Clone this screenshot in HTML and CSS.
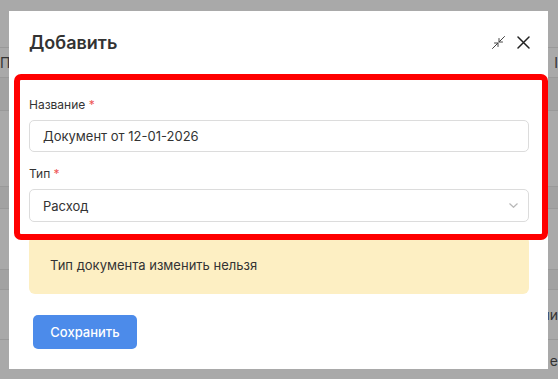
FILE: index.html
```html
<!DOCTYPE html>
<html lang="ru">
<head>
  <meta charset="UTF-8" />
  <meta name="viewport" content="width=device-width, initial-scale=1.0" />
  <title>Добавить</title>
  <link rel="stylesheet" href="styles.css">
</head>
<body>

  <!-- page under the overlay -->
  <div class="backdrop">
    <div class="row row-top"></div>
    <div class="row row-head"><span class="cut-left">По</span><span class="cut-right">I</span></div>
    <div class="row row-band"></div>
    <div class="row row-tall"></div>
    <div class="row row-band2"></div>
    <div class="row row-mid"></div>
    <div class="row row-band3"></div>
    <div class="row row-text"><span class="cut-right">пи</span></div>
    <div class="row row-last"><span class="cut-right">е</span></div>
  </div>

  <div class="modal">
    <div class="modal-header">
      <h2 class="modal-title">Добавить</h2>
      <div class="modal-tools">
        <button class="icon-btn" title="Свернуть">
          <svg width="13" height="13" viewBox="0 0 13 13" fill="none" stroke="#444" stroke-width="1" stroke-linecap="round">
            <path d="M12.5 0.5 L7 6"/>
            <path d="M7 2.5 V6 H10.5"/>
            <path d="M0.5 12.5 L6 7"/>
            <path d="M2.5 7 H6 V10.5"/>
          </svg>
        </button>
        <button class="icon-btn" title="Закрыть">
          <svg width="13" height="13" viewBox="0 0 13 13" fill="none" stroke="#222" stroke-width="1.5" stroke-linecap="round">
            <path d="M1 1 L12 12 M12 1 L1 12"/>
          </svg>
        </button>
      </div>
    </div>

    <div class="form-area">
      <div class="field">
        <label class="field-label">Название <span class="req">*</span></label>
        <div class="input">Документ от 12-01-2026</div>
      </div>
      <div class="field">
        <label class="field-label">Тип <span class="req">*</span></label>
        <div class="input select">
          <span>Расход</span>
          <svg width="9" height="5" viewBox="0 0 9 5" fill="none" stroke="#b8b8b8" stroke-width="1.2">
            <path d="M0.5 0.5 L4.5 4.3 L8.5 0.5"/>
          </svg>
        </div>
      </div>
      <div class="highlight"></div>
    </div>

    <div class="alert">Тип документа изменить нельзя</div>

    <button class="btn-save">Сохранить</button>
  </div>

</body>
</html>
```

FILE: styles.css
```css
:root {
  --overlay: #a9a9a9;
  --overlay-band: #a2a2a2;
  --line: #999;
  --text: #333;
  --border: #dcdcdc;
  --red: #ff0000;
  --alert: #fdefc3;
  --blue: #4c8bea;
}

* {
  box-sizing: border-box;
}

body {
  margin: 0;
  width: 558px;
  height: 379px;
  overflow: hidden;
  position: relative;
  font-family: 'Inter', 'Noto Sans', sans-serif;
  background-color: var(--overlay);
  color: var(--text);
}

/* backdrop table */
.backdrop {
  display: flex;
  flex-direction: column;
}

.row {
  border-bottom: 1px solid var(--line);
  display: flex;
  align-items: center;
  font-size: 14px;
  color: #333;
}

.row-top { height: 48px; }
.row-head { height: 30px; }
.row-band { height: 33px; background-color: var(--overlay-band); }
.row-tall { height: 76px; }
.row-band2 { height: 22px; background-color: var(--overlay-band); }
.row-mid { height: 61px; }
.row-band3 { height: 20px; background-color: var(--overlay-band); }
.row-text { height: 50px; }
.row-last { height: 40px; border-bottom: none; }

.cut-left { margin-left: 0; }
.cut-right { margin-left: auto; margin-right: 0; }

/* modal */
.modal {
  position: absolute;
  left: 9px;
  top: 11px;
  width: 539px;
  height: 358px;
  background: #fff;
  padding: 0 19px 0 20px;
}

.modal-header {
  display: flex;
  justify-content: space-between;
  align-items: flex-start;
  padding-top: 20px;
  height: 63px;
}

.modal-title {
  margin: 0;
  font-size: 18px;
  line-height: 24px;
  font-weight: 600;
  color: #333;
}

.modal-tools {
  display: flex;
  gap: 12px;
  padding-top: 5px;
  margin-right: -1px;
}

.icon-btn {
  background: none;
  border: none;
  padding: 0;
  width: 13px;
  height: 13px;
  cursor: pointer;
  display: flex;
}

.form-area {
  position: relative;
  padding-top: 23px;
}

.field {
  margin-bottom: 14px;
}

.field-label {
  display: block;
  font-size: 12px;
  line-height: 16px;
  color: #333;
  margin-bottom: 7px;
}

.req {
  color: #ee5555;
}

.input {
  height: 32px;
  border: 1px solid var(--border);
  border-radius: 5px;
  padding: 0 13px;
  font-size: 13px;
  line-height: 30px;
  color: #333;
}

.select {
  height: 33px;
  display: flex;
  align-items: center;
  justify-content: space-between;
  padding-right: 10px;
}

/* red annotation frame */
.highlight {
  position: absolute;
  left: -15px;
  right: -19px;
  top: 0;
  height: 166px;
  border: 6px solid var(--red);
  border-radius: 7px;
  pointer-events: none;
}

.alert {
  background-color: var(--alert);
  border-radius: 6px;
  height: 58px;
  padding: 0 21px;
  display: flex;
  align-items: center;
  font-size: 13px;
  color: #333;
}

.btn-save {
  margin: 21px 0 0 4px;
  width: 104px;
  height: 34px;
  border: none;
  border-radius: 5px;
  background-color: var(--blue);
  color: #fff;
  font-family: 'Inter', 'Noto Sans', sans-serif;
  font-size: 13px;
  font-weight: 500;
  cursor: pointer;
}
```
